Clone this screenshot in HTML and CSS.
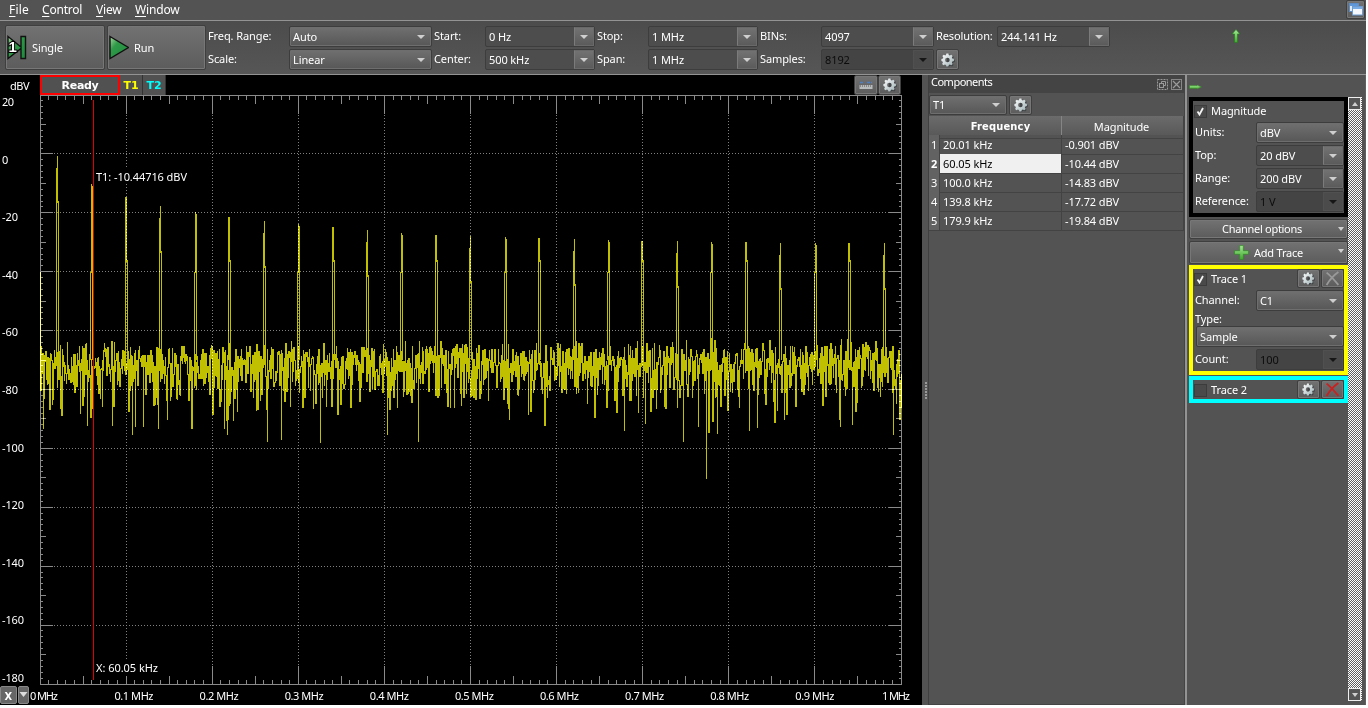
FILE: index.html
```html
<!DOCTYPE html>
<html lang="en">
<head>
<meta charset="utf-8">
<title>Spectrum analyzer</title>
<link rel="stylesheet" href="styles.css">
</head>
<body>
<svg class="defs" width="0" height="0">
  <defs>
    <linearGradient id="steel" x1="0" y1="0" x2="1" y2="1"><stop offset="0" stop-color="#fff"/><stop offset="1" stop-color="#9db0b4"/></linearGradient>
    <linearGradient id="leaf" x1="0" y1="0" x2="1" y2="1"><stop offset="0" stop-color="#a8d8a0"/><stop offset=".35" stop-color="#2f9a48"/><stop offset="1" stop-color="#1d8a3c"/></linearGradient>
    <linearGradient id="lime" x1="0" y1="0" x2="0" y2="1"><stop offset="0" stop-color="#a5e896"/><stop offset="1" stop-color="#3fa92c"/></linearGradient>
    <symbol id="gear" viewBox="0 0 14 14">
      <path d="M6.300 1.300h2.200l.4 1.700 1 .4 1.500-.9 1.500 1.500-.9 1.600.4 1 1.400.4v2.100l-1.500.4-.5 1 .8 1.500-1.500 1.500-1.500-.8-1 .4L8 14H6l-.5-1.400z" fill="#2c3133" opacity=".6"/>
      <path d="M5.400.5h2l.4 1.600 1.100.5 1.400-.9 1.400 1.400-.8 1.500.4 1 1.600.4v2l-1.600.4-.4 1 .8 1.500-1.400 1.400-1.400-.8-1.100.4-.4 1.600h-2L5 11.900l-1.100-.4-1.400.8-1.400-1.400.8-1.500-.4-1L.4 8V6L2 5.600l.3-1-.9-1.500 1.400-1.400 1.400.9L5 2.100zM6.400 4.700a2.300 2.300 0 1 0 0 4.600 2.300 2.300 0 0 0 0-4.600z" fill="url(#steel)" fill-rule="evenodd"/>
    </symbol>
    <symbol id="cross" viewBox="0 0 14 14"><path d="M1.500 1.500Q6 5 12.500 13M12.500 1Q6 5.500 1.500 13" fill="none" stroke="currentColor" stroke-width="1.700"/></symbol>
  </defs>
</svg>
<div class="app">
  <nav class="menu">
    <span class="m1"><u>F</u>ile</span><span class="m2"><u>C</u>ontrol</span><span class="m3"><u>V</u>iew</span><span class="m4"><u>W</u>indow</span>
    <button class="btn win"><svg width="14" height="13" viewBox="0 0 14 13"><rect x=".5" y=".5" width="9" height="8" fill="#dce9f8" stroke="#5b8cc8"/><path d="M1 1h8.500v2H1z" fill="#5e97da"/><rect x="3.500" y="3.500" width="10" height="8.500" fill="#f4f8fd" stroke="#6d9bd0"/><path d="M4 4h9.500v2H4z" fill="#79abe4"/></svg></button>
  </nav>
  <div class="toolbar">
    <button class="btn big"><svg width="20" height="26" viewBox="0 0 20 26"><path d="M1 1.500 14 12V1.500h4.500v22H14V13.500L1 23.500z" fill="url(#leaf)" stroke="#111" stroke-width="1.400"/><text x="1.500" y="17" class="one">1</text></svg><span>Single</span></button>
    <button class="btn big run"><svg width="20" height="26" viewBox="0 0 20 26"><path d="M1 1.500 19.500 12.500 1 23.500z" fill="url(#leaf)" stroke="#111" stroke-width="1.400"/></svg><span>Run</span></button>
    <div class="fields">
      <label>Freq. Range:</label><div class="select"><span>Auto</span><i></i></div>
      <label>Start:</label><div class="combo"><span>0 Hz</span><b><i></i></b></div>
      <label>Stop:</label><div class="combo"><span>1 MHz</span><b><i></i></b></div>
      <label>BINs:</label><div class="combo"><span>4097</span><b><i></i></b></div>
      <label>Resolution:</label><div class="combo"><span>244.141 Hz</span><b><i></i></b></div>
      <label>Scale:</label><div class="select"><span>Linear</span><i></i></div>
      <label>Center:</label><div class="combo"><span>500 kHz</span><b><i></i></b></div>
      <label>Span:</label><div class="combo"><span>1 MHz</span><b><i></i></b></div>
      <label>Samples:</label><div class="combo off"><span>8192</span><b><i></i></b></div>
      <button class="btn gear"><svg width="14" height="14"><use href="#gear"/></svg></button>
    </div>
    <svg class="up" width="10" height="14" viewBox="0 0 10 14"><path d="M5 .5 9 5H6.500v8.500h-3V5H1z" fill="url(#lime)" stroke="#2c7a25" stroke-width=".7"/></svg>
  </div>
  <main>
    <section class="plot">
      <header>
        <span class="unit">dBV</span><span class="ready">Ready</span><span class="tag t1">T1</span><span class="tag t2">T2</span>
        <button class="btn ruler"><svg width="14" height="12" viewBox="0 0 14 12"><path d="M1 3.500h4M8 3.500h5" stroke="#4d7fc4" stroke-width="1.500" stroke-dasharray="3 1"/><rect x=".5" y="6" width="13" height="4" fill="#b9bcbd"/><path d="M1 7h12" stroke="#555" stroke-dasharray="1 1"/></svg></button>
        <button class="btn gear"><svg width="14" height="14"><use href="#gear"/></svg></button>
      </header>
      <svg class="graph" width="922" height="610" viewBox="0 95 922 610">
        <path id="trace" class="trace"/>
        <path id="peaks" class="trace"/>
        <g class="blend"><path id="grid" class="grid"/><path id="ticks" class="ticks"/></g>
        <path class="cursor" d="M93.500 100V680"/>
        <rect x="95" y="169" width="94" height="15"/><rect x="95" y="659" width="65" height="15"/>
        <g id="labels" class="labels">
          <text x="96" y="181" textLength="91">T1: -10.44716 dBV</text>
          <text x="96" y="672" textLength="62">X: 60.05 kHz</text>
        </g>
        <g class="xbtn"><rect x=".5" y="686.500" width="16" height="17" rx="1.500"/><rect x="18.500" y="686.500" width="10" height="17" rx="1.500"/><path d="M19.500 692h8l-4 5z"/><text x="4.500" y="700">X</text></g>
      </svg>
    </section>
    <div class="splitter"><i></i><i></i><i></i><i></i><i></i><i></i></div>
    <section class="dock">
      <div class="title"><span>Components</span>
        <svg width="26" height="12" viewBox="0 0 26 12" fill="none" stroke="#999"><rect x=".5" y=".5" width="10" height="10" stroke-dasharray="2 1"/><rect x="2.500" y="4.500" width="4" height="4"/><path d="M4.500 4V2.500h4v4H7"/><rect x="14.500" y=".5" width="10" height="10" stroke="#888"/><path d="m16 2 7 7m0-7-7 7" stroke-width="1.200"/></svg>
      </div>
      <div class="pick"><div class="select"><span>T1</span><i></i></div><button class="btn gear"><svg width="14" height="14"><use href="#gear"/></svg></button></div>
      <div class="table">
        <div class="row head"><b>Frequency</b><span>Magnitude</span></div>
        <div class="row"><i>1</i><span>20.01 kHz</span><span>-0.901 dBV</span></div>
        <div class="row sel"><i>2</i><span>60.05 kHz</span><span>-10.44 dBV</span></div>
        <div class="row"><i>3</i><span>100.0 kHz</span><span>-14.83 dBV</span></div>
        <div class="row"><i>4</i><span>139.8 kHz</span><span>-17.72 dBV</span></div>
        <div class="row"><i>5</i><span>179.9 kHz</span><span>-19.84 dBV</span></div>
      </div>
    </section>
    <aside>
      <svg class="minus" width="13" height="6" viewBox="0 0 13 6"><path d="M.5 1.500H8V1l4.500 2L8 5v-.5H.5z" fill="url(#lime)" stroke="#3c7d30" stroke-width=".6"/></svg>
      <div class="body">
        <div class="panels">
          <div class="panel mag">
            <div class="chk"><em><svg width="9" height="9" viewBox="0 0 9 9"><path d="M1.500 4.500 3.500 7.500 7 1"/></svg></em><span>Magnitude</span></div>
            <div class="line"><label>Units:</label><div class="select"><span>dBV</span><i></i></div></div>
            <div class="line"><label>Top:</label><div class="combo"><span>20 dBV</span><b><i></i></b></div></div>
            <div class="line"><label>Range:</label><div class="combo"><span>200 dBV</span><b><i></i></b></div></div>
            <div class="line"><label>Reference:</label><div class="combo off"><span>1 V</span><b><i></i></b></div></div>
          </div>
          <button class="btn bar opts"><span>Channel options</span><i></i></button>
          <button class="btn bar add"><svg width="15" height="15" viewBox="0 0 14 14"><path d="M5.300.5h3.400v4.800h4.800v3.400H8.700v4.800H5.300V8.700H.5V5.300h4.800z" fill="url(#lime)" stroke="#2f8a22" stroke-width=".6"/></svg><span>Add Trace</span><i></i></button>
          <div class="panel tr1">
            <div class="chk"><em><svg width="9" height="9" viewBox="0 0 9 9"><path d="M1.500 4.500 3.500 7.500 7 1"/></svg></em><span>Trace 1</span><button class="btn gear"><svg width="13" height="13"><use href="#gear"/></svg></button><button class="btn x gray"><svg width="15" height="15"><use href="#cross"/></svg></button></div>
            <div class="line"><label>Channel:</label><div class="select"><span>C1</span><i></i></div></div>
            <label class="type">Type:</label>
            <div class="select full"><span>Sample</span><i></i></div>
            <div class="line last"><label>Count:</label><div class="combo off"><span>100</span><b><i></i></b></div></div>
          </div>
          <div class="panel tr2">
            <div class="chk"><em></em><span>Trace 2</span><button class="btn gear"><svg width="13" height="13"><use href="#gear"/></svg></button><button class="btn x red"><svg width="15" height="15"><use href="#cross"/></svg></button></div>
          </div>
        </div>
        <div class="scroll"><b class="upb"><i></i></b><b><i></i></b></div>
      </div>
    </aside>
  </main>
</div>
<script src="plot.js"></script>
</body>
</html>
```
FILE: styles.css
```css
* { box-sizing: border-box; }
body { margin: 0; background: #fff; font: 11px/14px "Noto Sans", "Open Sans", sans-serif; color: #fff; letter-spacing: -0.1px; }
button { font: inherit; color: inherit; letter-spacing: inherit; padding: 0; margin: 0; }
.defs { position: absolute; }
.app { width: 1366px; height: 705px; background: #535353; display: flex; flex-direction: column; overflow: hidden; }
.btn { border: 1px solid #3f3f3f; border-radius: 2px; background: linear-gradient(#727272, #5c5c5c); box-shadow: inset 0 0 0 1px #777; display: flex; align-items: center; justify-content: center; flex: none; }
.menu { height: 21px; flex: none; display: flex; font-size: 12px; line-height: 20px; border-bottom: 1px solid #939393; letter-spacing: 0; }
.menu u { text-underline-offset: 2px; }
.m1 { margin-left: 9px; width: 33px; letter-spacing: .2px; }
.m2 { width: 54px; letter-spacing: -.2px; }
.m3 { width: 39px; letter-spacing: -.2px; }
.m4 { letter-spacing: -.15px; }
.win { width: 19px; height: 19px; margin: 0 1px 0 auto; }
.toolbar { height: 54px; flex: none; display: flex; padding: 4px 0 0 5px; border-bottom: 1px solid #939393; background: linear-gradient(#4c4c4c, #565656); }
.big { width: 100px; height: 45px; justify-content: flex-start; padding-left: 1px; gap: 5px; margin-right: 2px; }
.big svg { margin-top: 1px; }
.big.run { width: 99px; margin-right: 2px; gap: 5px; }
.one { font: bold 15px "Liberation Sans", sans-serif; fill: #fff; stroke: #000; stroke-width: 2px; paint-order: stroke; }
.fields { display: grid; grid-template-columns: 81px 145px 51px 112px 51px 112px 61px 115px 61px 112px; grid-template-rows: 23px 23px; width: 902px; flex: none; }
.fields label { line-height: 22px; }
.fields .select { width: 143px; margin-top: 1px; }
.fields .combo { width: 110px; margin-top: 1px; }
.fields .combo:nth-child(8), .fields .combo:nth-child(10), .fields .combo.off { width: 113px; }
.fields .btn { width: 23px; height: 21px; margin-top: 1px; }
.select, .combo { height: 21px; border: 1px solid #3d3d3d; border-radius: 2px; display: flex; align-items: center; padding-left: 3px; }
.select { background: linear-gradient(#707070, #575757); box-shadow: inset 0 0 0 1px #6e6e6e; }
.select i, .combo i, .bar i, .scroll i { width: 0; height: 0; border: 4.5px solid transparent; border-top-color: #cfcfcf; border-bottom: 0; }
.select i { margin: 0 6px 0 auto; }
.combo { background: #4d4d4d; }
.combo b { margin-left: auto; width: 20px; height: 19px; background: linear-gradient(#727272, #5b5b5b); border: 1px solid #696969; border-left-color: #7b7b7b; display: flex; align-items: center; justify-content: center; }
.combo.off { background: #444; color: #0c0c0c; }
.combo.off b { background: #4b4b4b; border-color: #505050; }
.combo.off i { border-top-color: #161616; }
.up { margin: 4px 0 0 121px; }
main { flex: 1; display: flex; min-height: 0; }
.plot { width: 922px; background: #000; flex: none; }
.plot header { height: 20px; display: flex; }
.unit { width: 40px; padding-left: 10px; line-height: 21px; letter-spacing: -.4px; }
.ready { width: 80px; border: 2px solid #f00; background: #515151; text-align: center; font: bold 11px/18px "DejaVu Sans", sans-serif; letter-spacing: -.3px; }
.tag { width: 23px; background: #515151; border-right: 1px solid #333; font: bold 11px/22px "DejaVu Sans", sans-serif; text-align: center; }
.t1 { color: #ff0; }
.t2 { color: #0ff; }
.ruler { width: 24px; height: 20px; }
.plot .gear { width: 23px; height: 20px; margin-right: 21px; }
.plot header .ruler { margin-left: auto; }
.graph { display: block; overflow: visible; }
.trace, .grid, .ticks, .cursor { fill: none; stroke-width: 1; shape-rendering: crispEdges; }
.trace { stroke: #c0c000; }
.blend { mix-blend-mode: plus-lighter; }
.grid { stroke: #808080; stroke-dasharray: 1 2; }
.ticks { stroke: #8a8a8a; }
.cursor { stroke: #e00000; }
.labels text { fill: #fff; font-size: 11px; letter-spacing: 0; }
.xbtn rect { fill: #666; stroke: #888; }
.xbtn path { fill: #ddd; }
.xbtn text { fill: #fff; font: bold 11px "DejaVu Sans Condensed", "DejaVu Sans", sans-serif; }
.splitter { width: 7px; flex: none; padding-left: 1px; background: #535353; border-right: 1px solid #404040; display: flex; flex-direction: column; justify-content: center; align-items: center; gap: 1px; }
.splitter i { width: 2px; height: 2px; background: #999; }
.dock { width: 256px; flex: none; border: 1px solid #444; border-left: 0; border-top: 0; }
.title { height: 18px; background: #444; display: flex; justify-content: space-between; padding: 0 1px 0 2px; line-height: 14px; letter-spacing: -.5px; }
.title svg { margin-top: 4px; }
.pick { display: flex; gap: 2px; padding-top: 2px; height: 23px; }
.pick .select { width: 78px; height: 20px; }
.pick .btn { width: 23px; height: 20px; }
.row { display: grid; grid-template-columns: 11px 122px 122px; height: 19px; line-height: 19px; }
.row span { border: solid #434343; border-width: 0 1px 1px 0; padding-left: 3px; }
.row i { font-style: normal; text-align: center; background: #626262; border: solid #434343; border-width: 0 1px 1px 0; }
.head { grid-template-columns: 133px 122px; background: linear-gradient(#6b6b6b, #595959); text-align: center; line-height: 21px; }
.head span { padding: 0 2px 0 0; }
.head b { font: bold 11px/22px "DejaVu Sans Condensed", "DejaVu Sans", sans-serif; letter-spacing: .2px; padding-left: 11px; border-right: 1px solid #858585; border-bottom: 1px solid #434343; }
.sel i { font-weight: bold; }
.sel span:nth-child(2) { background: #f0f0f0; color: #000; }
aside { width: 181px; flex: none; border-left: 2px solid #939393; border-right: 1px solid #606060; padding-left: 2px; }
.minus { display: block; margin: 9px 0 7px 0; }
.body { display: flex; height: 605px; }
.panels { width: 159px; }
.panel { border: 4px solid #000; background: #535353; }
.mag { height: 120px; margin-bottom: 2px; }
.chk { display: flex; height: 20px; line-height: 20px; }
.chk em { width: 13px; height: 13px; margin: 4px 4px 0 1px; border: 1px solid #3c3c3c; background: #4a4a4a; display: flex; align-items: center; justify-content: center; }
.chk em path { fill: none; stroke: #f4f4f4; stroke-width: 1.8; }
.line { display: flex; height: 23px; padding: 1px 0 0 2px; }
.line label { width: 61px; line-height: 20px; }
.line .select, .line .combo { width: 88px; flex: none; }
.bar { width: 159px; height: 20px; position: relative; }
.bar i { position: absolute; right: 3px; top: 7px; border-width: 4px 3.5px 0; }
.opts { padding-right: 14px; letter-spacing: -.3px; padding-left: 1px; }
.add { height: 23px; margin: 2px 0 1px; gap: 5px; letter-spacing: -.2px; }
.tr1 { height: 110px; border-color: #ff0; }
.chk .gear { width: 23px; height: 19px; margin-left: auto; }
.chk .x { width: 23px; height: 19px; margin: 0 0 0 1px; }
.gray { color: #999; }
.red { color: #c92020; }
.type { display: block; height: 14px; padding-left: 2px; }
.full { margin: 0 0 0 3px; }
.last { padding-top: 2px; }
.tr2 { height: 27px; border-color: #0ff; margin-top: 1px; }
.scroll { width: 14px; height: 604px; display: flex; flex-direction: column; justify-content: space-between; background: repeating-conic-gradient(#fff 0 25%, #606060 0 50%) 0 0 / 2px 2px; }
.scroll b { width: 13px; height: 13px; background: #555; border: 1px solid #eee; display: flex; align-items: center; justify-content: center; }
.scroll i { border-width: 4px 3px 0; }
.scroll .upb i { transform: rotate(180deg); }
```
FILE: plot.js
```js
const LEFT = 40, RIGHT = 901, TOP = 95, BOTTOM = 684;
const xAt = m => LEFT + m * 86.1;
const yAt = db => TOP + (20 - db) * 2.947;

// Seeded generator keeps the noise floor stable between loads.
let seed = 20051;
const rnd = () => ((seed = (seed * 1664525 + 1013904223) >>> 0) + 1) / 4294967297;

const dips = {43:428,80:413,87:425,132:434,135:426,158:428,191:428,192:428,224:428,227:434,267:441,281:439,320:442,387:434,418:441,624:430,645:423,683:441,698:426,706:478,708:432,709:432,717:433,749:430,757:427,784:419,840:426,893:434};
let d = '', prev = 350;
for (let x = LEFT; x <= RIGHT; x++) {
  let lo = prev, hi = prev;
  for (let i = 0; i < 2; i++) {
    const power = -Math.log(rnd());
    const y = Math.min(Math.max(yAt(-70 + 11 * Math.log10(power)), 338 + rnd() * 12), 395 + rnd() * 35);
    lo = Math.min(lo, y); hi = Math.max(hi, y); prev = y;
  }
  if (dips[x]) { hi = dips[x]; prev = 370; }
  d += `M${x}.5 ${Math.round(lo)}V${Math.round(hi) + 1}`;
}
d += 'M40.5 272V355';
document.getElementById('trace').setAttribute('d', d);

const tops = [156,184,197,206,212,217,221,224,227,230,233,235,236,237,238,239,240,241,241,242,242,243,243,243,243];
document.getElementById('peaks').setAttribute('d', tops.map((t, k) => {
  const x = Math.round(57 + k * 34.44) + .5;
  const shape = k % 3;
  if (shape === 1) return `M${x - 1} 272V360M${x} ${t}V273M${x + 1} ${t + 2}V360`;
  if (shape === 2) return `M${x - 1} ${t}V360M${x} ${t}V262M${x + 1} 260V360`;
  return `M${x - 1} ${t + 12}V360M${x} ${t}V${t + 47}M${x + 1} ${t + 45}V360`;
}).join(''));

let grid = '', ticks = `M40.5 ${BOTTOM}.5V${TOP}.5H901.500V${BOTTOM}.5Z`;
for (let i = 1; i < 100; i++) {
  const x = Math.floor(xAt(i / 10)) + .5;
  const n = i % 10 === 0 ? 18 : i % 5 === 0 ? 8 : 4;
  ticks += `M${x} 96v${n}M${x} 684v${i === 10 ? -8 : -n}`;
  if (n === 18) grid += `M${x} 115V665`;
  const y = Math.floor(TOP + i * 5.89) + .5;
  const w = i % 10 === 0 ? 12 : i % 5 === 0 ? 5 : 2;
  ticks += `M41 ${y}h${w}M901 ${y}h${-w}`;
  if (w === 12) grid += `M54 ${y}H889`;
}
document.getElementById('grid').setAttribute('d', grid);
document.getElementById('ticks').setAttribute('d', ticks);

const group = document.getElementById('labels');
function label(text, x, y, len) {
  const t = document.createElementNS('http://www.w3.org/2000/svg', 'text');
  t.setAttribute('x', x); t.setAttribute('y', y);
  t.setAttribute('textLength', len);
  t.textContent = text;
  group.append(t);
}
const widths = {1: 6, 2: 12, 3: 16, 4: 22};
for (let i = 0; i <= 10; i++) {
  const s = String(20 - i * 20);
  label(s, 2, Math.round(106 + i * 57.6), widths[s.length]);
}
for (let i = 0; i <= 10; i++) {
  const s = i === 0 ? '0 MHz' : i === 10 ? '1 MHz' : `0.${i} MHz`;
  const x = i === 0 ? 30 : i === 10 ? 882 : 114.5 + (i - 1) * 85.1;
  label(s, x, 700, i % 10 ? 39 : 28);
}
```
